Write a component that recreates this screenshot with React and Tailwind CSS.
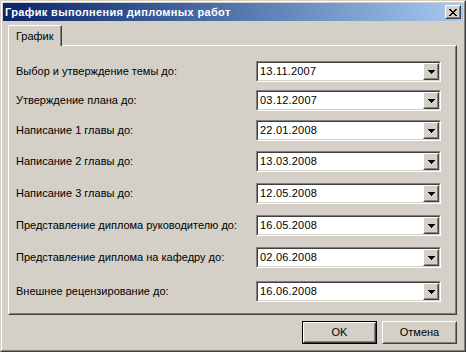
const rows = [
  { label: "Выбор и утверждение темы до:", value: "13.11.2007", mt: "mt-[14px]" },
  { label: "Утверждение плана до:", value: "03.12.2007", mt: "mt-[8px]" },
  { label: "Написание 1 главы до:", value: "22.01.2008", mt: "mt-[9px]" },
  { label: "Написание 2 главы до:", value: "13.03.2008", mt: "mt-[10px]" },
  { label: "Написание 3 главы до:", value: "12.05.2008", mt: "mt-[11px]" },
  { label: "Представление диплома руководителю до:", value: "16.05.2008", mt: "mt-[11px]" },
  { label: "Представление диплома на кафедру до:", value: "02.06.2008", mt: "mt-[11px]" },
  { label: "Внешнее рецензирование до:", value: "16.06.2008", mt: "mt-[13px]" },
];

function Raised({ className = "", innerClass = "", children }) {
  return (
    <div className={"border border-t-white border-l-white border-r-[#404040] border-b-[#404040] " + className}>
      <div className={"h-full w-full border border-t-[#d4d0c8] border-l-[#d4d0c8] border-r-[#808080] border-b-[#808080] bg-[#d4d0c8] " + innerClass}>
        {children}
      </div>
    </div>
  );
}

function Combo({ value }) {
  return (
    <div className="h-[21px] w-[185px] border border-t-[#808080] border-l-[#808080] border-r-white border-b-white">
      <div className="flex h-full w-full border border-t-[#404040] border-l-[#404040] border-r-[#d4d0c8] border-b-[#d4d0c8] bg-white">
        <div className="flex-1 pl-[2px] text-[11px] leading-[17px] tracking-[0.2px] text-black">{value}</div>
        <Raised className="h-[17px] w-[16px]" innerClass="flex items-center justify-center">
          <svg width="7" height="4" viewBox="0 0 7 4" shapeRendering="crispEdges">
            <path d="M0 0h7v1H0zM1 1h5v1H1zM2 2h3v1H2zM3 3h1v1H3z" fill="#000" />
          </svg>
        </Raised>
      </div>
    </div>
  );
}

function Button({ children, isDefault }) {
  const btn = (
    <Raised className={isDefault ? "h-[21px] w-[73px]" : "h-[23px] w-[75px]"} innerClass="flex items-center justify-center text-[11px] text-black">
      {children}
    </Raised>
  );
  if (!isDefault) return btn;
  return <div className="border border-black">{btn}</div>;
}

export default function App() {
  return (
    <div
      className="h-[352px] w-[466px] overflow-hidden"
      style={{ fontFamily: '"Liberation Sans", Arial, sans-serif' }}
    >
      <div className="h-full w-full border border-t-[#d4d0c8] border-l-[#d4d0c8] border-r-[#404040] border-b-[#404040]">
        <div className="flex h-full w-full flex-col border border-t-white border-l-white border-r-[#808080] border-b-[#808080] bg-[#d4d0c8] p-px">
          <div className="flex h-[18px] items-center justify-between bg-gradient-to-r from-[#0a246a] to-[#a6caf0] pl-[2px] pr-[2px]">
            <span className="text-[11px] font-bold tracking-[0.35px] text-white">График выполнения дипломных работ</span>
            <Raised className="h-[14px] w-[16px]" innerClass="flex items-center justify-center">
              <svg width="8" height="7" viewBox="0 0 8 7" shapeRendering="crispEdges">
                <path d="M0 0h2v1H0zM6 0h2v1H6zM1 1h2v1H1zM5 1h2v1H5zM2 2h4v1H2zM3 3h2v1H3zM2 4h4v1H2zM1 5h2v1H1zM5 5h2v1H5zM0 6h2v1H0zM6 6h2v1H6z" fill="#000" />
              </svg>
            </Raised>
          </div>

          <div className="mt-[4px] ml-[5px] mr-[6px] flex flex-col">
            <div className="relative z-10 -mb-px flex h-[21px] w-[54px] items-center border border-b-0 border-t-white border-l-white border-r-[#404040] bg-[#d4d0c8] rounded-t-[2px]">
              <div className="flex h-full w-full items-center border-r border-r-[#808080] pl-[7px] text-[11px] text-black">
                График
              </div>
            </div>
            <div className="h-[270px] border border-t-white border-l-white border-r-[#404040] border-b-[#404040]">
              <div className="h-full w-full border border-t-[#d4d0c8] border-l-[#d4d0c8] border-r-[#808080] border-b-[#808080] pl-[6px] pr-[14px]">
                {rows.map((r) => (
                  <div key={r.value + r.label} className={"flex h-[21px] items-center justify-between " + r.mt}>
                    <span className="text-[11px] text-black">{r.label}</span>
                    <Combo value={r.value} />
                  </div>
                ))}
              </div>
            </div>
          </div>

          <div className="mt-[6px] mr-[6px] flex justify-end gap-[5px]">
            <Button isDefault>OK</Button>
            <Button>Отмена</Button>
          </div>
        </div>
      </div>
    </div>
  );
}
